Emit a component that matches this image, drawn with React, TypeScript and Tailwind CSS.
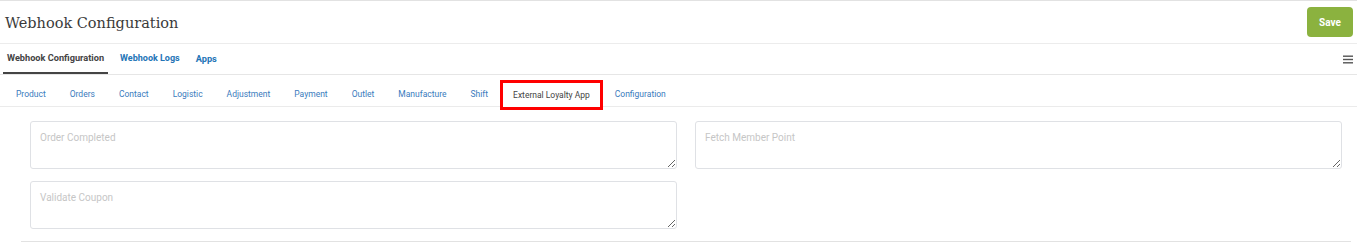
import React from "react";

const subTabs = [
  "Product",
  "Orders",
  "Contact",
  "Logistic",
  "Adjustment",
  "Payment",
  "Outlet",
  "Manufacture",
  "Shift",
  "External Loyalty App",
  "Configuration",
];

function Field({ label }: { label: string }) {
  return (
    <textarea
      placeholder={label}
      className="block w-full h-[48px] rounded-[3px] border border-[#dfe1e5] bg-white pl-[9px] pt-[10px] text-[10px] leading-[12px] text-[#555] placeholder:text-[#c6c6c6] outline-none font-['Roboto',sans-serif]"
    />
  );
}

export default function App() {
  return (
    <div className="w-[1357px] h-[243px] overflow-hidden bg-white font-['Roboto',sans-serif] border-t border-[#e2e2e2]">
      {/* Header */}
      <div className="h-[43px] flex items-center justify-between pl-[5px] pr-[4px] border-b border-[#ececec]">
        <h1 className="font-['DejaVu_Serif',serif] text-[14.5px] text-[#3a3a3a] font-normal leading-none pt-[2px]">
          Webhook Configuration
        </h1>
        <button className="w-[46px] h-[30px] rounded-[4px] bg-[#8bb23f] text-white text-[10px] font-bold">
          Save
        </button>
      </div>

      {/* Main tabs */}
      <div className="h-[31px] flex items-stretch justify-between border-b border-[#e6e6e6] pl-[3px] pr-[4px]">
        <div className="flex items-stretch gap-[8px]">
          <div className="px-[4px] flex items-center border-b-2 border-[#444] text-[9.2px] font-bold text-[#444]">
            Webhook Configuration
          </div>
          <div className="px-[4px] flex items-center text-[9px] font-bold text-[#2374b6]">
            Webhook Logs
          </div>
          <div className="px-[4px] flex items-center text-[9.2px] font-bold text-[#2374b6]">
            Apps
          </div>
        </div>
        <div className="flex items-center">
          <svg width="10" height="9" viewBox="0 0 10 9">
            <rect x="0" y="0.5" width="10" height="1.4" fill="#555" />
            <rect x="0" y="3.8" width="10" height="1.4" fill="#555" />
            <rect x="0" y="7.1" width="10" height="1.4" fill="#555" />
          </svg>
        </div>
      </div>

      {/* Sub tabs */}
      <div className="h-[32px] flex items-start border-b border-[#ebebeb] pl-[4px] pt-[5px]">
        {subTabs.map((t) =>
          t === "External Loyalty App" ? (
            <div
              key={t}
              className="relative z-10 h-[30px] px-[10px] flex items-center bg-white border-[3px] border-[#ff0000] text-[8.5px] text-[#444]"
            >
              {t}
            </div>
          ) : (
            <div
              key={t}
              className="h-[28px] px-[12px] flex items-center text-[8.5px] text-[#3a7bbd]"
            >
              {t}
            </div>
          )
        )}
      </div>

      {/* Form */}
      <div className="ml-[21px] w-[1330px] pt-[14px] pb-[12px] border-b border-[#e2e2e2]">
        <div className="grid grid-cols-2 gap-y-[12px]">
          <div className="px-[9px]">
            <Field label="Order Completed" />
          </div>
          <div className="px-[9px]">
            <Field label="Fetch Member Point" />
          </div>
          <div className="px-[9px]">
            <Field label="Validate Coupon" />
          </div>
          <div />
        </div>
      </div>
    </div>
  );
}
